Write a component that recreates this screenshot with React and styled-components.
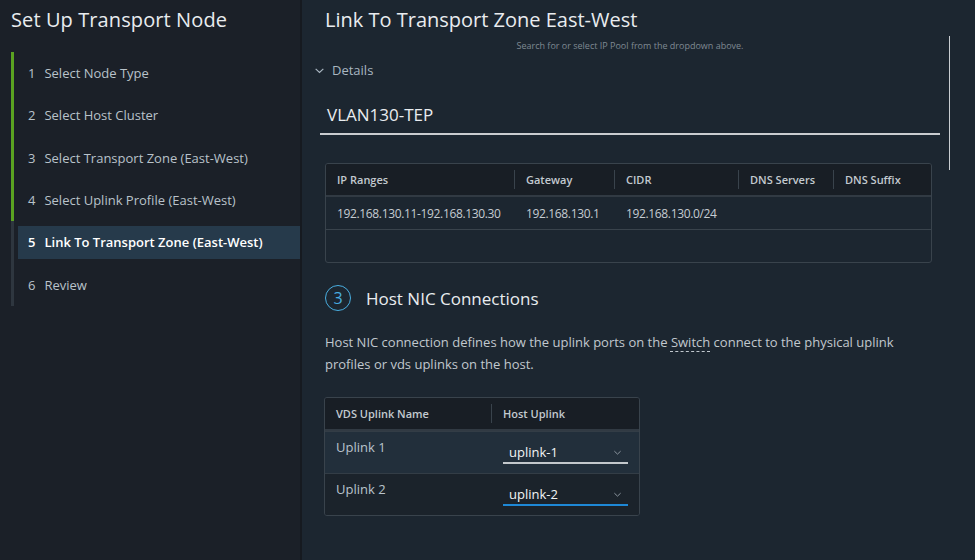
import React from 'react'
import styled, { createGlobalStyle } from 'styled-components'

const GlobalStyle = createGlobalStyle`
  html, body {
    margin: 0;
    padding: 0;
    background: #1c2630;
  }
  body {
    font-family: 'Open Sans', 'Noto Sans', sans-serif;
    color: #e9ecef;
  }
`

const Page = styled.div`
  display: flex;
  height: 560px;
  overflow: hidden;
`

const Sidebar = styled.aside`
  width: 302px;
  flex-shrink: 0;
  background: #1b2028;
  border-right: 2px solid #161a20;
  padding-left: 11px;
  box-sizing: border-box;
`

const SideTitle = styled.h1`
  margin: 0;
  height: 38px;
  display: flex;
  align-items: center;
  font-size: 20px;
  font-weight: 400;
  color: #e9ecef;
  letter-spacing: 0.1px;
`

const Steps = styled.ol`
  list-style: none;
  margin: 14px 0 0;
  padding: 0;
`

const StepRow = styled.li`
  display: flex;
  height: 42.3px;
  border-left: 3px solid ${p => (p.done ? '#5aa221' : '#2e363f')};
  align-items: center;
`

const StepItem = styled.div`
  flex: 1;
  margin-left: 4px;
  height: 33px;
  display: flex;
  align-items: center;
  padding-left: 10px;
  font-size: 13px;
  color: ${p => (p.active ? '#ffffff' : '#b9c2ca')};
  font-weight: ${p => (p.active ? 600 : 400)};
  background: ${p => (p.active ? '#263a4b' : 'transparent')};
`

const StepNum = styled.span`
  margin-right: 9px;
`

const Main = styled.main`
  flex: 1;
  position: relative;
  padding: 0 35px 0 18px;
  box-sizing: border-box;
`

const Title = styled.h2`
  margin: 0;
  padding-left: 5px;
  height: 38px;
  display: flex;
  align-items: center;
  font-size: 20px;
  font-weight: 400;
  color: #e9ecef;
`

const Hint = styled.div`
  text-align: center;
  font-size: 9px;
  color: #7f8992;
  line-height: 14px;
  margin-top: 1px;
`

const ScrollThumb = styled.div`
  position: absolute;
  left: 647px;
  top: 36px;
  width: 1px;
  height: 134px;
  background: #c9cdd1;
`

const DetailsToggle = styled.div`
  display: flex;
  align-items: center;
  gap: 7px;
  height: 22px;
  margin-top: 6px;
  font-size: 13px;
  color: #a9b6c1;
  svg {
    margin-left: -6px;
  }
`

const PoolName = styled.div`
  margin-top: 14px;
  padding: 0 0 0 7px;
  height: 38px;
  display: flex;
  align-items: center;
  font-size: 17px;
  color: #e9ecef;
  border-bottom: 2px solid #c9cccf;
`

const Gap = styled.div`
  height: ${p => p.size}px;
`

const Table = styled.table`
  border-collapse: separate;
  border-spacing: 0;
  border: 1px solid #39434c;
  border-radius: 3px;
  overflow: hidden;
  table-layout: fixed;
  width: ${p => p.width}px;
  margin-left: ${p => p.offset || 0}px;
`

const Th = styled.th`
  position: relative;
  text-align: left;
  font-size: 11px;
  font-weight: 600;
  color: #c3cad0;
  background: #181e25;
  height: 31px;
  padding: 0 12px;
  border-bottom: 2px solid #313a43;
  &:first-child {
    padding-left: 11px;
  }
  &:not(:first-child)::before {
    content: '';
    position: absolute;
    left: 0;
    top: 6px;
    bottom: 6px;
    width: 1px;
    background: #39434c;
  }
`

const Td = styled.td`
  font-size: 12px;
  letter-spacing: -0.35px;
  color: #c5ccd2;
  height: 32px;
  padding: 0 12px;
  border-top: ${p => (p.first ? 'none' : '1px solid #39434c')};
  white-space: nowrap;
  &:first-child {
    padding-left: 11px;
  }
`

const SectionHead = styled.div`
  display: flex;
  align-items: center;
  gap: 15px;
  margin-top: 22px;
  padding-left: 5px;
`

const Badge = styled.span`
  width: 24px;
  height: 24px;
  border: 1px solid #49aee0;
  border-radius: 50%;
  display: flex;
  align-items: center;
  justify-content: center;
  color: #49aee0;
  font-size: 16px;
`

const SectionTitle = styled.span`
  font-size: 17px;
  color: #e9ecef;
`

const Para = styled.p`
  margin: 20px 0 0 5px;
  max-width: 600px;
  font-size: 13px;
  line-height: 22px;
  color: #c1c8ce;
`

const Dotted = styled.span`
  text-decoration-line: underline;
  text-decoration-style: dashed;
  text-decoration-thickness: 1px;
  text-underline-offset: 4px;
`

const UplinkTd = styled.td`
  vertical-align: top;
  height: 42px;
  padding: 0 12px;
  box-sizing: border-box;
  font-size: 13px;
  color: #b9c3cc;
  background: ${p => (p.alt ? '#1b232b' : '#222f3b')};
  border-top: 1px solid #333d46;
  &:first-child {
    padding-left: 11px;
  }
`

const Label = styled.div`
  padding-top: 6px;
`

const Select = styled.div`
  margin-top: 10px;
  width: 125px;
  height: 22px;
  display: flex;
  align-items: center;
  justify-content: space-between;
  padding: 0 6px;
  box-sizing: border-box;
  font-size: 13px;
  color: #f2f4f5;
  border-bottom: 2px solid ${p => (p.focused ? '#1e88d6' : '#c3c8cc')};
`

const Chevron = ({ size = 9, color = '#8b959e' }) => (
  <svg width={size} height={size} viewBox="0 0 10 10">
    <path d="M1.5 3.5 L5 6.8 L8.5 3.5" fill="none" stroke={color} strokeWidth="1.1" />
  </svg>
)

const steps = [
  'Select Node Type',
  'Select Host Cluster',
  'Select Transport Zone (East-West)',
  'Select Uplink Profile (East-West)',
  'Link To Transport Zone (East-West)',
  'Review',
]

const cols = [
  ['IP Ranges', 188],
  ['Gateway', 100],
  ['CIDR', 124],
  ['DNS Servers', 95],
  ['DNS Suffix', 98],
]

const rowData = ['192.168.130.11-192.168.130.30', '192.168.130.1', '192.168.130.0/24', '', '']

const uplinks = [
  ['Uplink 1', 'uplink-1'],
  ['Uplink 2', 'uplink-2'],
]

export default function App() {
  return (
    <Page>
      <GlobalStyle />
      <Sidebar>
        <SideTitle>Set Up Transport Node</SideTitle>
        <Steps>
          {steps.map((s, idx) => (
            <StepRow key={idx} done={idx < 4}>
              <StepItem active={idx === 4}>
                <StepNum>{idx + 1}</StepNum>
                {s}
              </StepItem>
            </StepRow>
          ))}
        </Steps>
      </Sidebar>
      <Main>
        <Title>Link To Transport Zone East-West</Title>
        <Hint>Search for or select IP Pool from the dropdown above.</Hint>
        <ScrollThumb />
        <DetailsToggle>
          <Chevron size={11} color="#a9b6c1" />
          Details
        </DetailsToggle>
        <PoolName>VLAN130-TEP</PoolName>
        <Gap size={28} />
        <Table width={605} offset={5}>
          <colgroup>
            {cols.map(([c, w]) => (
              <col key={c} style={{ width: w }} />
            ))}
          </colgroup>
          <thead>
            <tr>
              {cols.map(([c]) => (
                <Th key={c}>{c}</Th>
              ))}
            </tr>
          </thead>
          <tbody>
            <tr>
              {rowData.map((v, idx) => (
                <Td key={idx} first>
                  {v}
                </Td>
              ))}
            </tr>
            <tr>
              {rowData.map((_, idx) => (
                <Td key={idx} />
              ))}
            </tr>
          </tbody>
        </Table>
        <SectionHead>
          <Badge>3</Badge>
          <SectionTitle>Host NIC Connections</SectionTitle>
        </SectionHead>
        <Para>
          Host NIC connection defines how the uplink ports on the <Dotted>Switch</Dotted> connect to the physical uplink
          <br />
          profiles or vds uplinks on the host.
        </Para>
        <Gap size={22} />
        <Table width={314} offset={4}>
          <colgroup>
            <col style={{ width: 166 }} />
            <col style={{ width: 148 }} />
          </colgroup>
          <thead>
            <tr>
              <Th>VDS Uplink Name</Th>
              <Th>Host Uplink</Th>
            </tr>
          </thead>
          <tbody>
            {uplinks.map(([name, val], idx) => (
              <tr key={name}>
                <UplinkTd alt={idx === 1}>
                  <Label>{name}</Label>
                </UplinkTd>
                <UplinkTd alt={idx === 1}>
                  <Select focused={idx === 1}>
                    {val}
                    <Chevron />
                  </Select>
                </UplinkTd>
              </tr>
            ))}
          </tbody>
        </Table>
      </Main>
    </Page>
  )
}
